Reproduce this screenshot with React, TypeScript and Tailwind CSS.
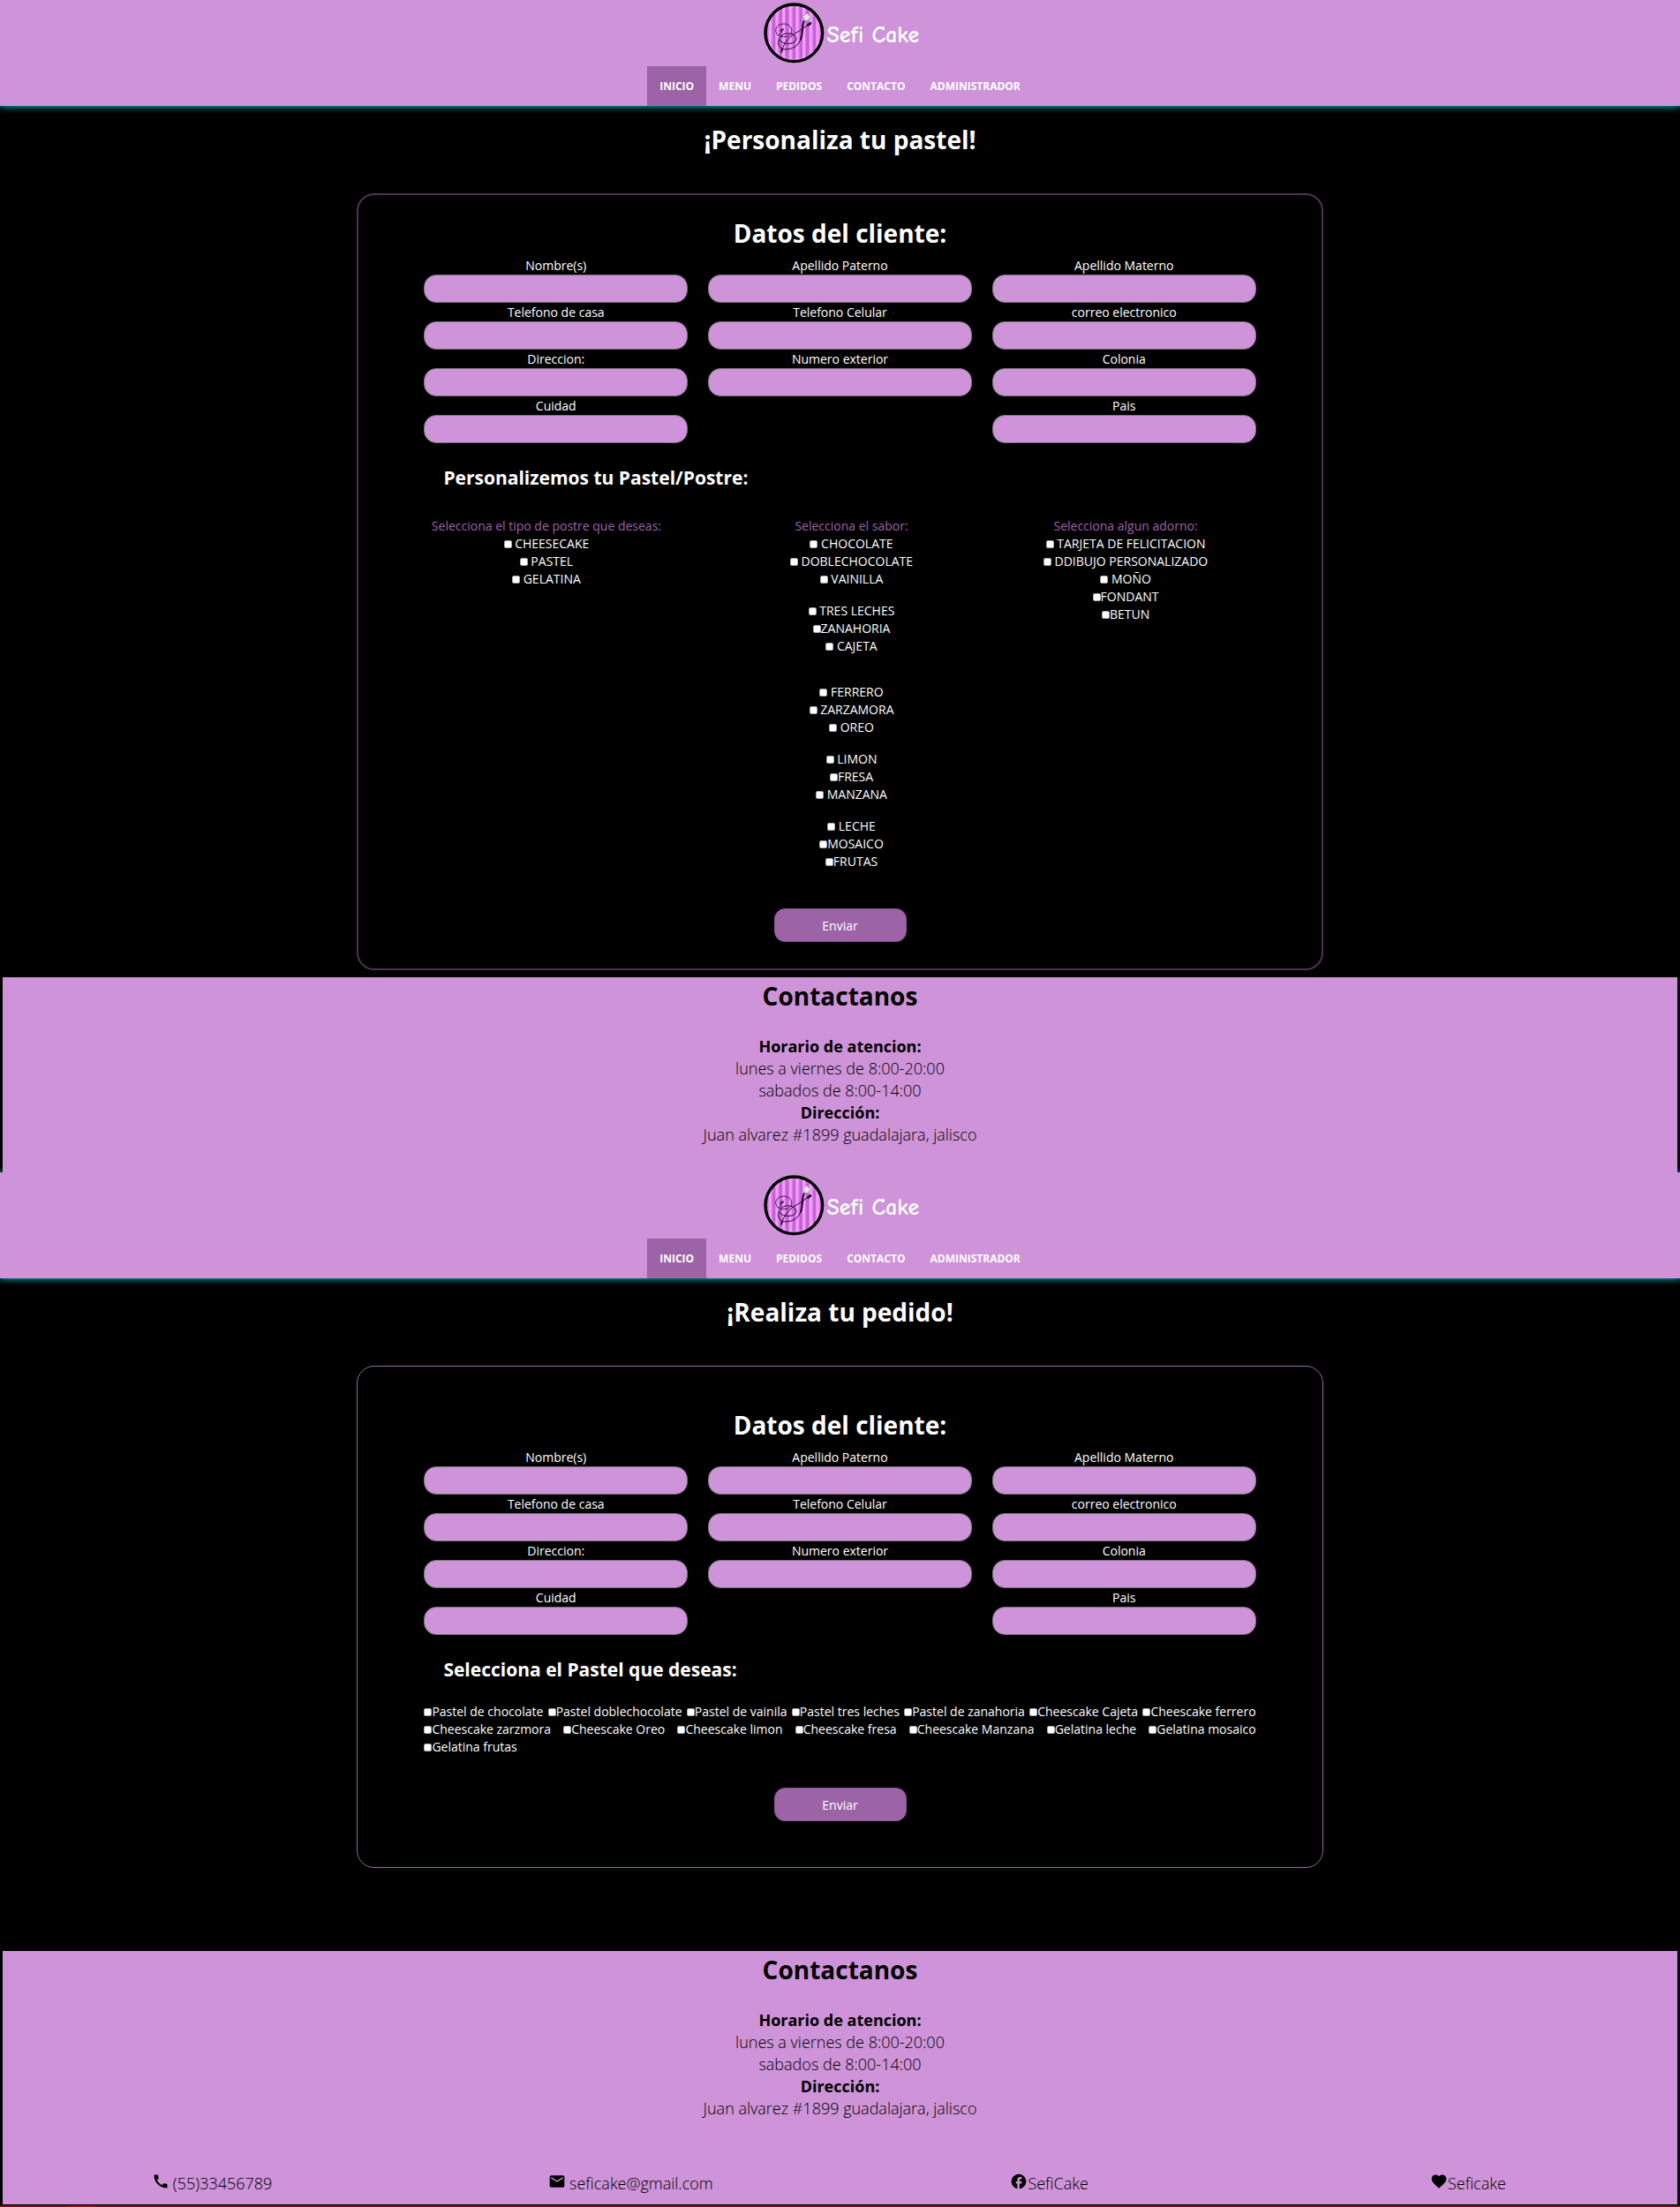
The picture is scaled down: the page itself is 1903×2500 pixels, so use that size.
import { useId } from "react";
import { MdCall, MdMail, MdFacebook, MdFavorite } from "react-icons/md";

const FIELDS: (string | null)[] = [
  "Nombre(s)",
  "Apellido Paterno",
  "Apellido Materno",
  "Telefono de casa",
  "Telefono Celular",
  "correo electronico",
  "Direccion:",
  "Numero exterior",
  "Colonia",
  "Cuidad",
  null,
  "Pais",
];

const NAV = ["MENU", "PEDIDOS", "CONTACTO", "ADMINISTRADOR"];

// A leading space in a name keeps a gap between the tick box and its text.
const DESSERTS = [[" CHEESECAKE", " PASTEL", " GELATINA"]];
const FLAVOURS = [
  [" CHOCOLATE", " DOBLECHOCOLATE", " VAINILLA"],
  [" TRES LECHES", "ZANAHORIA", " CAJETA"],
  [],
  [" FERRERO", " ZARZAMORA", " OREO"],
  [" LIMON", "FRESA", " MANZANA"],
  [" LECHE", "MOSAICO", "FRUTAS"],
];
const EXTRAS = [[" TARJETA DE FELICITACION", " DDIBUJO PERSONALIZADO", " MOÑO", "FONDANT", "BETUN"]];

const CAKES = [
  "Pastel de chocolate",
  "Pastel doblechocolate",
  "Pastel de vainila",
  "Pastel tres leches",
  "Pastel de zanahoria",
  "Cheescake Cajeta",
  "Cheescake ferrero",
  "Cheescake zarzmora",
  "Cheescake Oreo",
  "Cheescake limon",
  "Cheescake fresa",
  "Cheescake Manzana",
  "Gelatina leche",
  "Gelatina mosaico",
  "Gelatina frutas",
];

function Logo() {
  const clip = useId();
  return (
    <svg viewBox="42 9 207 207" className="size-[69px]" aria-hidden="true">
      <clipPath id={clip}>
        <circle cx="145" cy="112" r="97" />
      </clipPath>
      <g clipPath={`url(#${clip})`}>
        <rect x="42" y="9" width="207" height="207" fill="#ff99ff" />
        {[48, 71, 94, 117, 140, 163, 186, 209, 232].map((x) => (
          <g key={x}>
            <rect x={x} y="9" width="11" height="207" fill="#bd66d6" />
            <rect x={x - 3} y="9" width="3" height="207" fill="#d880ea" />
          </g>
        ))}
      </g>
      <circle cx="145" cy="112" r="87" fill="none" stroke="#d9b4ec" strokeWidth="2" strokeDasharray="9 7" />
      <circle cx="145" cy="112" r="97" fill="none" stroke="#000" strokeWidth="10" />
      <g fill="none" stroke="#1a0a1e" strokeLinecap="round">
        <path
          d="M104 100C110 108 96 116 92 122C76 106 82 84 108 81C130 80 142 98 136 112C130 128 104 128 96 120"
          strokeWidth="2.5"
        />
        <path d="M100 106C102 98 108 98 109 101" strokeWidth="4" />
        <path
          d="M180 70C170 88 178 112 166 138C156 162 128 172 104 166C86 158 88 128 110 116C132 108 156 120 152 136C144 152 112 154 94 136"
          strokeWidth="3"
        />
        <path d="M200 80C186 88 168 104 148 114C126 128 106 152 103 178" strokeWidth="3" />
        <path d="M179 72C171 92 177 110 168 134" strokeWidth="6" />
        <path d="M201 79L193 85" strokeWidth="8" />
        <path d="M104 168L103 176" strokeWidth="5" />
      </g>
      <path
        d="M180 70L179 61C172 60 174 50 181 52C184 44 194 45 195 52C203 51 204 61 197 62L195 70Z"
        fill="#e4e4e4"
        stroke="#8c8c8c"
        strokeWidth="2"
      />
    </svg>
  );
}

function Header() {
  return (
    <header className="flex h-[120px] flex-col items-center justify-between bg-[#ce93d8] shadow-[0_0_8px_#00e6e6]">
      <div className="flex items-center gap-[3px] pt-[3px] pl-[3px]">
        <Logo />
        <span className="pt-1 font-['Comic_Sans_MS','Comic_Neue',Lato,sans-serif] text-[26px] leading-[30px] font-black text-white">
          Sefi Cake
        </span>
      </div>
      <nav className="flex text-[12px] leading-[45px] font-bold text-white">
        <a href="#inicio" className="bg-[#9c64a6] px-[14px]">
          INICIO
        </a>
        {NAV.map((item) => (
          <a key={item} href={`#${item.toLowerCase()}`} className="px-[14px]">
            {item}
          </a>
        ))}
      </nav>
    </header>
  );
}

function Field({ label }: { label: string }) {
  const id = useId();
  return (
    <div className="flex flex-col text-center">
      <label htmlFor={id} className="text-[14px] leading-[21px]">
        {label}
      </label>
      <input
        id={id}
        type="text"
        className="h-8 w-full rounded-[14px] border border-[#767676] bg-[#ce93d8] px-3 text-black"
      />
    </div>
  );
}

function ClientFields() {
  return (
    <>
      <h2 className="text-center text-[28px] leading-[36px] font-bold">Datos del cliente:</h2>
      <div className="mt-2 grid grid-cols-3 gap-x-[23px]">
        {FIELDS.map((f, i) => (f ? <Field key={i} label={f} /> : <div key={i} />))}
      </div>
    </>
  );
}

function Check({ label }: { label: string }) {
  return (
    <label className="inline-block whitespace-pre">
      <input
        type="checkbox"
        className="inline-block size-[9px] appearance-none rounded-[2px] border border-[#a8a8a8] bg-white align-baseline checked:bg-[#9c64a6]"
      />
      {label}
    </label>
  );
}

function Choices({ title, groups }: { title: string; groups: string[][] }) {
  return (
    <fieldset className="flex flex-col gap-4 text-center">
      <legend className="w-full whitespace-nowrap text-[#9c64a6]">{title}</legend>
      {groups.map((g, i) => (
        <div key={i} className="flex flex-col items-center">
          {g.map((c) => (
            <Check key={c} label={c} />
          ))}
        </div>
      ))}
    </fieldset>
  );
}

function Send() {
  return (
    <button
      type="submit"
      className="mx-auto block h-[38px] w-[150px] rounded-[12px] border border-[#8a5893] bg-[#9c64a6] text-[14px] text-white"
    >
      Enviar
    </button>
  );
}

function ContactInfo() {
  return (
    <div className="text-center text-[18px] leading-[25px] font-light">
      <h2 className="text-[28px] leading-[43px] font-bold">Contactanos</h2>
      <p className="mt-[23px] font-bold">Horario de atencion:</p>
      <p>lunes a viernes de 8:00-20:00</p>
      <p>sabados de 8:00-14:00</p>
      <p className="font-bold">Dirección:</p>
      <p>Juan alvarez #1899 guadalajara, jalisco</p>
    </div>
  );
}

export default function App() {
  return (
    <div className="min-h-screen bg-black font-['Segoe_UI','Open_Sans',sans-serif] text-white">
      <Header />
      <main>
        <h1 className="pt-[17px] text-center text-[28px] leading-[42px] font-bold">¡Personaliza tu pastel!</h1>
        <form className="mx-auto mt-10 w-[57.5%] rounded-[20px] border-2 border-[#4f3254] px-[74px] pt-[25px] pb-[30px]">
          <ClientFields />
          <h3 className="mt-[24px] ml-[22px] text-[21px] leading-[30px] font-bold">Personalizemos tu Pastel/Postre:</h3>
          <div className="mt-[30px] grid grid-cols-[277fr_414fr_207fr_44fr] text-[14px] leading-[20px]">
            <Choices title="Selecciona el tipo de postre que deseas:" groups={DESSERTS} />
            <Choices title="Selecciona el sabor:" groups={FLAVOURS} />
            <Choices title="Selecciona algun adorno:" groups={EXTRAS} />
          </div>
          <div className="mt-[43px]">
            <Send />
          </div>
        </form>
      </main>
      <footer className="relative mx-[3px] mt-2 h-[221px] bg-[#ce93d8] text-black">
        <ContactInfo />
      </footer>

      <Header />
      <main>
        <h1 className="pt-[17px] text-center text-[28px] leading-[42px] font-bold">¡Realiza tu pedido!</h1>
        <form className="mx-auto mt-10 w-[57.5%] rounded-[20px] border border-[#9c64a6] px-[75px] pt-[48px] pb-[52px]">
          <ClientFields />
          <h3 className="mt-[24px] ml-[22px] text-[21px] leading-[30px] font-bold">Selecciona el Pastel que deseas:</h3>
          <div className="mt-[23px] text-justify text-[14px] leading-[20px]">
            {CAKES.map((c) => (
              <span key={c}>
                <Check label={c} />{" "}
              </span>
            ))}
          </div>
          <div className="mt-[36px]">
            <Send />
          </div>
        </form>
      </main>
      <footer className="mx-[3px] mt-[94px] bg-[#ce93d8] pb-[11px] text-black">
        <ContactInfo />
        <div className="mt-[60px] grid grid-cols-4 text-[18px] leading-[25px] font-light">
          <a href="tel:5533456789" className="flex justify-center gap-1">
            <MdCall className="size-5" />
            (55)33456789
          </a>
          <a href="mailto:seficake@gmail.com" className="flex justify-center gap-1">
            <MdMail className="size-5" />
            seficake@gmail.com
          </a>
          <a href="#facebook" className="flex justify-center">
            <MdFacebook className="size-5" />
            SefiCake
          </a>
          <a href="#seficake" className="flex justify-center">
            <MdFavorite className="size-5" />
            Seficake
          </a>
        </div>
      </footer>
      <div className="mt-px flex h-[2px] bg-[#7b0f18]">
        <div className="ml-[76px] w-8 bg-[#c00000]" />
      </div>
    </div>
  );
}
